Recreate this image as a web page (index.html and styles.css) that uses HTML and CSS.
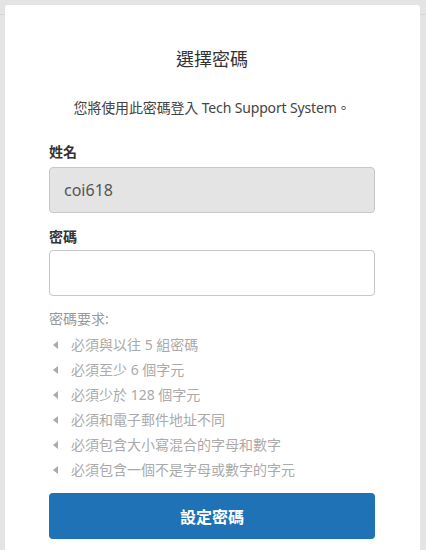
FILE: index.html
```html
<!DOCTYPE html>
<html lang="zh-Hant">
<head>
<meta charset="utf-8">
<title>選擇密碼</title>
<link rel="stylesheet" href="styles.css">
</head>
<body>
<main class="card">
  <h1 class="title">選擇密碼</h1>
  <p class="subtitle">您將使用此密碼登入 Tech Support System。</p>
  <form class="form">
    <label class="label" for="name">姓名</label>
    <input class="input input-readonly" id="name" type="text" value="coi618" readonly>
    <label class="label label-second" for="pw">密碼</label>
    <input class="input" id="pw" type="password">
    <div class="req-title">密碼要求:</div>
    <ul class="req-list">
      <li class="req-item"><span class="arrow"></span>必須與以往 5 組密碼</li>
      <li class="req-item"><span class="arrow"></span>必須至少 6 個字元</li>
      <li class="req-item"><span class="arrow"></span>必須少於 128 個字元</li>
      <li class="req-item"><span class="arrow"></span>必須和電子郵件地址不同</li>
      <li class="req-item"><span class="arrow"></span>必須包含大小寫混合的字母和數字</li>
      <li class="req-item"><span class="arrow"></span>必須包含一個不是字母或數字的字元</li>
    </ul>
    <button class="btn" type="button">設定密碼</button>
  </form>
</main>
</body>
</html>
```
FILE: styles.css
```css
html, body {
  margin: 0;
  padding: 0;
}
body {
  background: linear-gradient(to bottom, #e4e4e4 0, #e4e4e4 14px, #d5d5d5 14px, #d5d5d5 15px, #e4e4e4 15px);
  font-family: "Noto Sans", "Noto Sans CJK TC", sans-serif;
  color: #333;
  padding: 5px 6px 0 5px;
  height: 550px;
  box-sizing: border-box;
  overflow: hidden;
}
.card {
  background: #fff;
  border-radius: 3px 3px 0 0;
  padding: 42px 45px 20px 44px;
  min-height: 545px;
  box-sizing: border-box;
}
.title {
  margin: 0;
  font-size: 18px;
  line-height: 24px;
  font-weight: 400;
  text-align: center;
  color: #333;
}
.subtitle {
  margin: 27px 0 0;
  font-size: 14px;
  line-height: 20px;
  text-align: center;
  color: #444;
  letter-spacing: -0.15px;
}
.form {
  display: flex;
  flex-direction: column;
  margin-top: 24px;
}
.label {
  font-size: 14px;
  line-height: 20px;
  font-weight: 700;
  color: #333;
  margin-bottom: 5px;
}
.label-second {
  margin-top: 14px;
  margin-bottom: 3px;
}
.input {
  height: 46px;
  box-sizing: border-box;
  border: 1px solid #c8c8c8;
  border-radius: 4px;
  padding: 0 14px;
  font-family: "Noto Sans", "Noto Sans CJK TC", sans-serif;
  font-size: 16px;
  color: #555;
  background: #fff;
  outline: none;
}
.input-readonly {
  background: #e4e4e4;
}
.req-title {
  margin-top: 13px;
  font-size: 14px;
  line-height: 20px;
  color: #999;
}
.req-list {
  list-style: none;
  margin: 3px 0 0;
  padding: 0;
}
.req-item {
  display: flex;
  align-items: center;
  font-size: 14px;
  line-height: 25px;
  color: #aaa;
}
.arrow {
  width: 0;
  height: 0;
  border-top: 4px solid transparent;
  border-bottom: 4px solid transparent;
  border-right: 5px solid #aaa;
  margin: 0 13px 0 4px;
}
.btn {
  margin-top: 11px;
  height: 46px;
  border: none;
  border-radius: 4px;
  background: #1f72b6;
  color: #fff;
  font-family: "Noto Sans", "Noto Sans CJK TC", sans-serif;
  font-size: 16px;
  font-weight: 700;
  cursor: pointer;
}
```
